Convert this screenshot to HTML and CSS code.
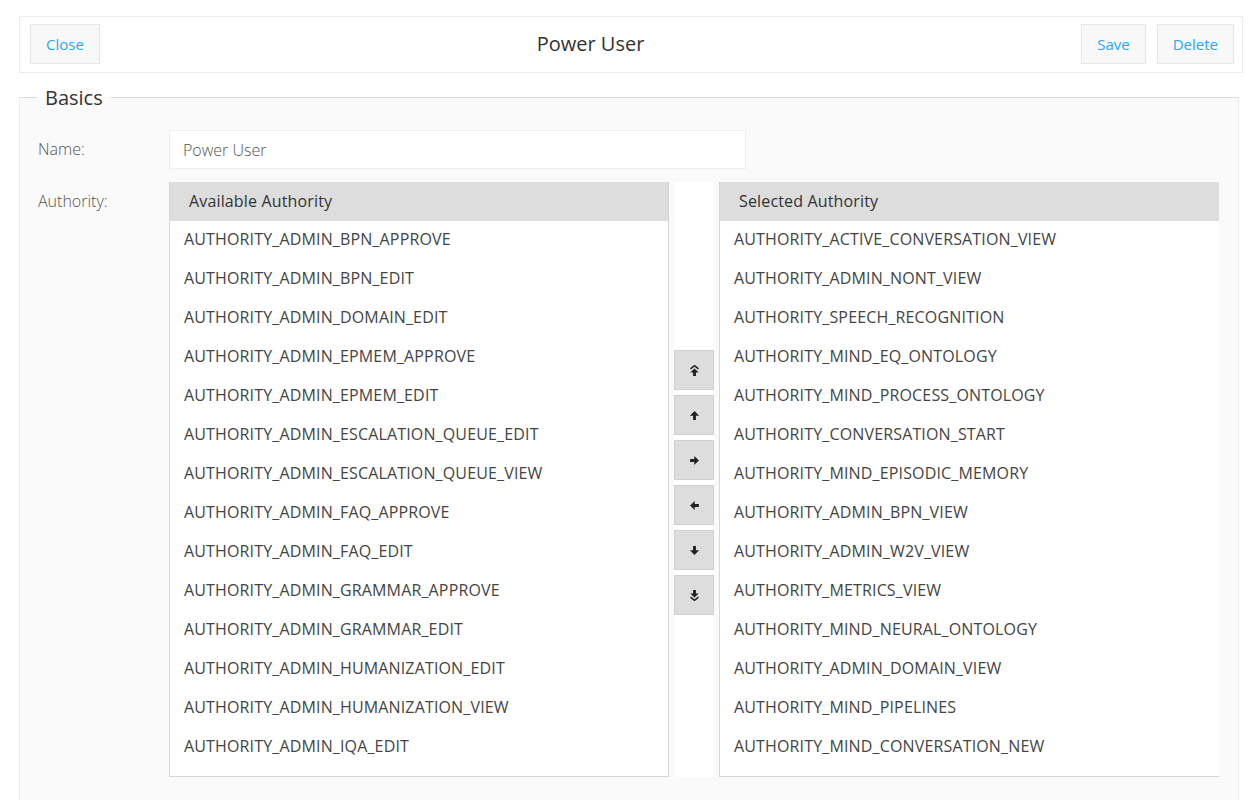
FILE: index.html
```html
<!DOCTYPE html>
<html>
<head>
<meta charset="utf-8">
<title>Power User</title>
<link rel="stylesheet" href="styles.css">
</head>
<body>
<div class="page">
  <header class="topbar">
    <button class="btn">Close</button>
    <h1 class="title">Power User</h1>
    <div class="actions">
      <button class="btn">Save</button>
      <button class="btn">Delete</button>
    </div>
  </header>

  <fieldset class="basics">
    <legend>Basics</legend>
    <div class="row">
      <label class="label">Name:</label>
      <input class="input" type="text" value="Power User">
    </div>
    <div class="row">
      <div class="label">Authority:</div>
      <div class="picker">
        <div class="list">
          <div class="list-head">Available Authority</div>
          <ul class="items">
            <li>AUTHORITY_ADMIN_BPN_APPROVE</li>
            <li>AUTHORITY_ADMIN_BPN_EDIT</li>
            <li>AUTHORITY_ADMIN_DOMAIN_EDIT</li>
            <li>AUTHORITY_ADMIN_EPMEM_APPROVE</li>
            <li>AUTHORITY_ADMIN_EPMEM_EDIT</li>
            <li>AUTHORITY_ADMIN_ESCALATION_QUEUE_EDIT</li>
            <li>AUTHORITY_ADMIN_ESCALATION_QUEUE_VIEW</li>
            <li>AUTHORITY_ADMIN_FAQ_APPROVE</li>
            <li>AUTHORITY_ADMIN_FAQ_EDIT</li>
            <li>AUTHORITY_ADMIN_GRAMMAR_APPROVE</li>
            <li>AUTHORITY_ADMIN_GRAMMAR_EDIT</li>
            <li>AUTHORITY_ADMIN_HUMANIZATION_EDIT</li>
            <li>AUTHORITY_ADMIN_HUMANIZATION_VIEW</li>
            <li>AUTHORITY_ADMIN_IQA_EDIT</li>
          </ul>
        </div>
        <div class="controls">
          <button class="ctl" title="Move to top">
            <svg viewBox="0 0 10 10" width="11" height="11"><path d="M1.4 3.6 L5 0.6 L8.6 3.6" fill="none" stroke="#222" stroke-width="1.4"/><path d="M5 3.2 L8.8 6.8 H6.3 V9.9 H3.7 V6.8 H1.2 Z" fill="#222"/></svg>
          </button>
          <button class="ctl" title="Move up">
            <svg viewBox="0 0 10 10" width="11" height="11"><path d="M5 1 L9.2 5.2 H6.3 V9 H3.7 V5.2 H0.8 Z" fill="#222"/></svg>
          </button>
          <button class="ctl" title="Add">
            <svg viewBox="0 0 10 10" width="11" height="11"><path d="M9 5 L4.8 9.2 V6.3 H1 V3.7 H4.8 V0.8 Z" fill="#222"/></svg>
          </button>
          <button class="ctl" title="Remove">
            <svg viewBox="0 0 10 10" width="11" height="11"><path d="M1 5 L5.2 0.8 V3.7 H9 V6.3 H5.2 V9.2 Z" fill="#222"/></svg>
          </button>
          <button class="ctl" title="Move down">
            <svg viewBox="0 0 10 10" width="11" height="11"><path d="M5 9 L0.8 4.8 H3.7 V1 H6.3 V4.8 H9.2 Z" fill="#222"/></svg>
          </button>
          <button class="ctl" title="Move to bottom">
            <svg viewBox="0 0 10 10" width="11" height="11"><path d="M5 6.8 L1.2 3.2 H3.7 V0.1 H6.3 V3.2 H8.8 Z" fill="#222"/><path d="M1.4 6.4 L5 9.4 L8.6 6.4" fill="none" stroke="#222" stroke-width="1.4"/></svg>
          </button>
        </div>
        <div class="list list-right">
          <div class="list-head">Selected Authority</div>
          <ul class="items">
            <li>AUTHORITY_ACTIVE_CONVERSATION_VIEW</li>
            <li>AUTHORITY_ADMIN_NONT_VIEW</li>
            <li>AUTHORITY_SPEECH_RECOGNITION</li>
            <li>AUTHORITY_MIND_EQ_ONTOLOGY</li>
            <li>AUTHORITY_MIND_PROCESS_ONTOLOGY</li>
            <li>AUTHORITY_CONVERSATION_START</li>
            <li>AUTHORITY_MIND_EPISODIC_MEMORY</li>
            <li>AUTHORITY_ADMIN_BPN_VIEW</li>
            <li>AUTHORITY_ADMIN_W2V_VIEW</li>
            <li>AUTHORITY_METRICS_VIEW</li>
            <li>AUTHORITY_MIND_NEURAL_ONTOLOGY</li>
            <li>AUTHORITY_ADMIN_DOMAIN_VIEW</li>
            <li>AUTHORITY_MIND_PIPELINES</li>
            <li>AUTHORITY_MIND_CONVERSATION_NEW</li>
          </ul>
        </div>
      </div>
    </div>
  </fieldset>
</div>
</body>
</html>
```

FILE: styles.css
```css
* { box-sizing: border-box; }

html, body {
  margin: 0;
  padding: 0;
  background: #fff;
  font-family: "Open Sans", "Liberation Sans", sans-serif;
  color: #333;
}

.page {
  padding: 16px 8px 0 19px;
}

.topbar {
  display: flex;
  align-items: flex-start;
  height: 57px;
  padding: 7px 8px 0 10px;
  border: 1px solid #ececec;
  background: #fff;
}

.title {
  flex: 1;
  margin: 0;
  text-align: center;
  font-size: 20px;
  font-weight: 400;
  line-height: 39px;
  color: #333;
}

.actions {
  display: flex;
  gap: 11px;
}

.btn {
  height: 40px;
  padding: 0 15px;
  border: 1px solid #e6e6e6;
  background: #f8f8f8;
  color: #2aa8f2;
  font-family: "Open Sans", "Liberation Sans", sans-serif;
  font-size: 15px;
  line-height: 38px;
}

.basics {
  margin: 11px 4px 0 0;
  padding: 19px 18px 40px 18px;
  border: 1px solid #ebebeb;
  border-top-color: #dcdcdc;
  background: #fafafa;
  min-width: 0;
}

.basics legend {
  margin-left: -1px;
  padding: 0 8px;
  font-size: 20px;
  line-height: 27px;
  color: #333;
}

.row {
  display: flex;
  align-items: flex-start;
  margin-bottom: 13px;
}

.label {
  width: 131px;
  flex: none;
  font-size: 16px;
  font-weight: 300;
  line-height: 39px;
  color: #555;
}

.input {
  width: 577px;
  height: 39px;
  padding: 0 13px;
  border: 1px solid #eeeeee;
  background: #fff;
  font-family: "Open Sans", "Liberation Sans", sans-serif;
  font-size: 16px;
  font-weight: 300;
  color: #555;
  outline: none;
}

.picker {
  display: flex;
  gap: 5px;
  height: 595px;
}

.list {
  width: 500px;
  height: 595px;
  flex: none;
  display: flex;
  flex-direction: column;
  border: 1px solid #d6d6d6;
  border-top: none;
  background: #fff;
  overflow: hidden;
}

.list-right {
  border-right: none;
}

.list-head {
  height: 39px;
  flex: none;
  margin: 0 -1px;
  padding-left: 20px;
  background: #dddddd;
  font-size: 16px;
  letter-spacing: 0.15px;
  line-height: 39px;
  color: #333;
}

.items {
  list-style: none;
  margin: 0;
  padding: 0;
  overflow: hidden;
}

.items li {
  height: 39px;
  padding-left: 14px;
  font-size: 16px;
  letter-spacing: 0.15px;
  line-height: 37px;
  color: #444;
  white-space: nowrap;
}

.controls {
  width: 40px;
  flex: none;
  display: flex;
  flex-direction: column;
  justify-content: center;
  gap: 5px;
  background: #fff;
  padding-top: 6px;
}

.ctl {
  width: 40px;
  height: 40px;
  padding: 0;
  border: 1px solid #d0d0d0;
  background: #dddddd;
  display: flex;
  align-items: center;
  justify-content: center;
}

.ctl svg {
  display: block;
}
```
